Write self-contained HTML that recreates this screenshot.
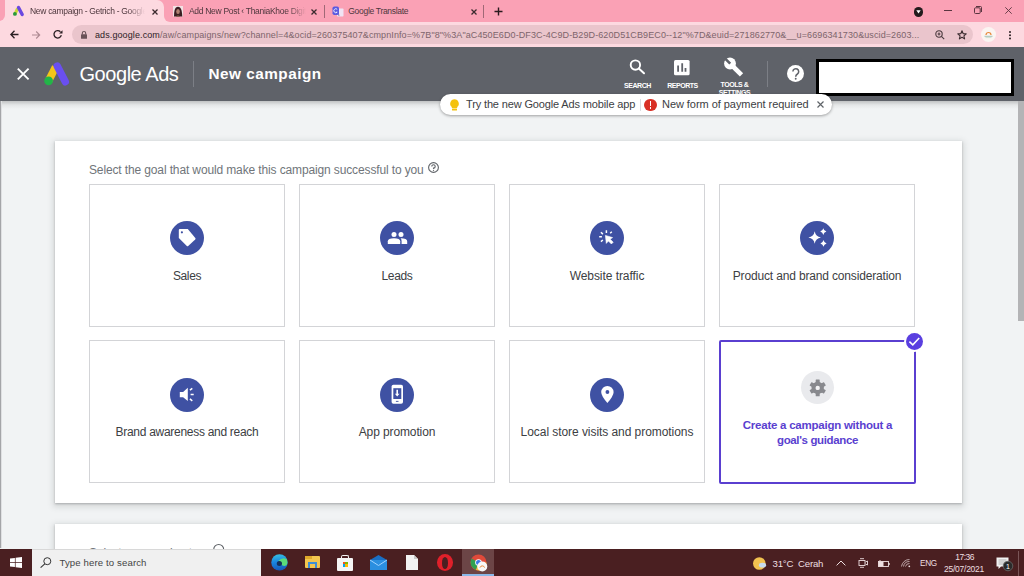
<!DOCTYPE html>
<html><head><meta charset="utf-8">
<style>
*{margin:0;padding:0;box-sizing:border-box}
html,body{width:1024px;height:576px;overflow:hidden;font-family:"Liberation Sans",sans-serif;background:#f1f3f4;position:relative}
.a{position:absolute}
svg{position:absolute;overflow:visible}
#tabbar{left:0;top:0;width:1024px;height:22px;background:#faa1b5}
#tab1{left:5px;top:0;width:159px;height:22px;background:#fdd9e0;border-radius:0 7px 0 0}
#addr{left:0;top:22px;width:1024px;height:25px;background:#fdd9e0}
#pill{left:72px;top:25px;width:901px;height:19px;background:#eac5cc;border-radius:10px}
.tt{font-size:8.5px;color:#4d373d;white-space:nowrap;letter-spacing:-0.3px}
#hdr{left:0;top:47px;width:1024px;height:54px;background:#5f6269}
#content{left:0;top:101px;width:1024px;height:447px;background:#f1f3f4}
#scroll{left:1018px;top:101px;width:6px;height:220px;background:#b4b4b6}
#card{left:55px;top:141px;width:907px;height:362px;background:#fff;box-shadow:0 1px 2px rgba(60,64,67,.3),0 2px 6px 2px rgba(60,64,67,.15)}
#card2{left:55px;top:524px;width:907px;height:40px;background:#fff;box-shadow:0 1px 2px rgba(60,64,67,.3),0 2px 6px 2px rgba(60,64,67,.15)}
.tile{position:absolute;width:196px;height:143px;border:1px solid #d3d4d7;background:#fff}
.tile .ic{position:absolute;left:80px;top:36px;width:34px;height:34px;border-radius:50%;background:#3f51a3}
.tile .ic svg{left:0;top:0}
.tile .lb{position:absolute;left:-10px;right:-10px;top:83.8px;text-align:center;font-size:12px;color:#3c4043;letter-spacing:-0.22px;white-space:nowrap}
#taskbar{left:0;top:549px;width:1024px;height:27px;background:#4a1f21}
.wt{color:#fff;font-size:7px;font-weight:bold;white-space:nowrap;text-align:center;letter-spacing:-0.45px}
.tb{color:#eedfe0;font-size:10px;white-space:nowrap}
</style></head><body>
<!-- TAB BAR -->
<div id="tabbar" class="a"></div>
<div id="tab1" class="a"></div>
<!-- tab flare -->
<div class="a" style="left:0;top:12px;width:8px;height:10px;background:#fdd9e0"></div>
<div class="a" style="left:-6px;top:0;width:11px;height:21px;background:#faa1b5;border-radius:0 0 6px 0"></div>
<div class="a" style="left:164px;top:14px;width:6px;height:8px;background:#fdd9e0"></div>
<div class="a" style="left:164px;top:8px;width:12px;height:14px;background:#faa1b5;border-radius:0 0 0 6px"></div>
<!-- tab1 favicon google ads -->
<svg style="left:12px;top:6px" width="12" height="10" viewBox="0 0 12 10">
 <path d="M5.6 2.5 L3 8" stroke="#c8d83a" stroke-width="3" stroke-linecap="butt"/>
 <circle cx="2.9" cy="7.9" r="1.9" fill="#2a9a3a"/>
 <path d="M6.5 1.5 L10.2 8.5" stroke="#6a48e0" stroke-width="3.4" stroke-linecap="round"/>
</svg>
<div class="a tt" style="left:30px;top:6.3px;width:115px;overflow:hidden;-webkit-mask-image:linear-gradient(90deg,#000 85%,transparent)">New campaign - Getrich - Google Ads</div>
<svg style="left:152px;top:9px" width="6" height="6" viewBox="0 0 6 6"><path d="M0.5 0.5L5.5 5.5M5.5 0.5L0.5 5.5" stroke="#3a2a2e" stroke-width="1.3"/></svg>
<!-- tab2 -->
<svg style="left:173px;top:5.5px" width="10" height="11" viewBox="0 0 10 11"><rect x="0" y="0" width="10" height="10.5" fill="#f2e2e4"/><path d="M1 10.5Q1 3 3 1.5Q5 0 7 1.5Q9 3 9.3 10.5Z" fill="#3a1e22"/><ellipse cx="5" cy="5.5" rx="1.8" ry="2.6" fill="#b08070"/><path d="M3 10.5Q5 7.5 7 10.5Z" fill="#6a4a30"/></svg>
<div class="a tt" style="left:189px;top:6.3px;width:117px;overflow:hidden;-webkit-mask-image:linear-gradient(90deg,#000 85%,transparent)">Add New Post ‹ ThaniaKhoe Digital</div>
<svg style="left:311px;top:9px" width="6" height="6" viewBox="0 0 6 6"><path d="M0.5 0.5L5.5 5.5M5.5 0.5L0.5 5.5" stroke="#3a2a2e" stroke-width="1.3"/></svg>
<div class="a" style="left:324px;top:5px;width:1px;height:13px;background:#a06876"></div>
<!-- tab3 -->
<svg style="left:332px;top:5.5px" width="12" height="11" viewBox="0 0 12 11"><rect x="5" y="2.5" width="6.5" height="8" rx="0.8" fill="#f0e4f4"/><rect x="0.5" y="0.5" width="6.5" height="8.5" rx="1.8" fill="#5b5ae0"/><path d="M5.2 3.3A2 2 0 1 0 5.2 6.2H3.8" fill="none" stroke="#e8e8ff" stroke-width="1"/><path d="M6 8.5L7.2 10.2V8.5Z" fill="#3a2a80"/></svg>
<div class="a tt" style="left:348.3px;top:6.3px">Google Translate</div>
<svg style="left:471px;top:9px" width="6" height="6" viewBox="0 0 6 6"><path d="M0.5 0.5L5.5 5.5M5.5 0.5L0.5 5.5" stroke="#3a2a2e" stroke-width="1.3"/></svg>
<div class="a" style="left:483px;top:5px;width:1px;height:13px;background:#a06876"></div>
<svg style="left:494px;top:7px" width="9" height="9" viewBox="0 0 9 9"><path d="M4.5 0.5V8.5M0.5 4.5H8.5" stroke="#2a1a1e" stroke-width="1.4"/></svg>
<!-- window controls -->
<div class="a" style="left:913.5px;top:7px;width:9.5px;height:9.5px;background:#231a1c;border-radius:50%"></div>
<svg style="left:916px;top:10px" width="5" height="4" viewBox="0 0 5 4"><path d="M0.3 0.3H4.7L2.5 3.6Z" fill="#fff"/></svg>
<div class="a" style="left:944px;top:9.5px;width:8px;height:1px;background:#5a3540"></div>
<svg style="left:974px;top:6px" width="8" height="8" viewBox="0 0 8 8"><rect x="0.5" y="1.8" width="5.7" height="5.7" rx="1" fill="none" stroke="#5a3540" stroke-width="1"/><path d="M2 0.5H6.5Q7.5 0.5 7.5 1.5V6" fill="none" stroke="#5a3540" stroke-width="1"/></svg>
<svg style="left:1005px;top:7px" width="7" height="7" viewBox="0 0 7 7"><path d="M0.3 0.3L6.7 6.7M6.7 0.3L0.3 6.7" stroke="#5a3540" stroke-width="0.9"/></svg>

<!-- ADDRESS BAR -->
<div id="addr" class="a"></div>
<svg style="left:10px;top:30px" width="9" height="9" viewBox="0 0 9 9"><path d="M8.5 4.5H1M4.5 0.8L0.9 4.5L4.5 8.2" fill="none" stroke="#2a1e22" stroke-width="1.3"/></svg>
<svg style="left:32px;top:30.5px" width="9" height="8" viewBox="0 0 9 8"><path d="M0 4H7.6M4.2 0.5L7.7 4L4.2 7.5" fill="none" stroke="#ae8a92" stroke-width="1.1"/></svg>
<svg style="left:53px;top:30px" width="10" height="9" viewBox="0 0 10 9"><path d="M8.3 5.2A3.7 3.7 0 1 1 7.4 1.8" fill="none" stroke="#2a1e22" stroke-width="1.3"/><path d="M9.5 0.2V3.6H6.1Z" fill="#2a1e22"/></svg>
<div id="pill" class="a"></div>
<svg style="left:81px;top:31px" width="6" height="8" viewBox="0 0 6 8"><rect x="0" y="3.3" width="6" height="4.5" rx="0.6" fill="#6a5258"/><path d="M1.3 3.5V2.2A1.7 1.7 0 0 1 4.7 2.2V3.5" fill="none" stroke="#6a5258" stroke-width="1.1"/></svg>
<div class="a" style="left:95px;top:30.1px;font-size:9px;white-space:nowrap;color:#7d646b;letter-spacing:0.1px"><span style="color:#2e2226">ads.google.com</span>/aw/campaigns/new?channel=4&amp;ocid=260375407&amp;cmpnInfo=%7B"8"%3A"aC450E6D0-DF3C-4C9D-B29D-620D51CB9EC0--12"%7D&amp;euid=271862770&amp;__u=6696341730&amp;uscid=2603...</div>
<svg style="left:935px;top:30px" width="10" height="10" viewBox="0 0 10 10"><circle cx="4" cy="4" r="3.2" fill="none" stroke="#4a3a3e" stroke-width="1.1"/><path d="M6.4 6.4L9.2 9.2M2.6 4H5.4M4 2.6V5.4" stroke="#4a3a3e" stroke-width="1.1"/></svg>
<svg style="left:956.5px;top:29.5px" width="10" height="10" viewBox="0 0 10 10"><path d="M5 0.8L6.2 3.7L9.2 3.9L6.9 5.9L7.6 8.9L5 7.3L2.4 8.9L3.1 5.9L0.8 3.9L3.8 3.7Z" fill="none" stroke="#3a2a2e" stroke-width="1.1" stroke-linejoin="round"/></svg>
<div class="a" style="left:981px;top:27px;width:15px;height:15px;border-radius:50%;background:#fbf5f2"></div>
<svg style="left:983px;top:29px" width="11" height="11" viewBox="0 0 11 11"><path d="M3 6A2.5 2.5 0 0 1 8 6" fill="none" stroke="#e8893a" stroke-width="1.2"/><path d="M1.5 7.3H9.5" stroke="#8fb8a8" stroke-width="0.8"/><path d="M2.5 8.6H8.5" stroke="#b5d0c0" stroke-width="0.6"/></svg>
<div class="a" style="left:1008.5px;top:31px;width:2px;height:2px;background:#2a1e22;border-radius:50%;box-shadow:0 3.3px 0 #2a1e22,0 6.6px 0 #2a1e22"></div>

<!-- HEADER -->
<div id="hdr" class="a"></div>
<svg style="left:17px;top:67.8px" width="12.4" height="12" viewBox="0 0 12.4 12"><path d="M0.8 0.6L11.6 11.4M11.6 0.6L0.8 11.4" stroke="#fff" stroke-width="1.9"/></svg>
<svg style="left:43px;top:62px" width="27" height="24" viewBox="0 0 27 24">
 <path d="M12.6 5L5.6 18.8" stroke="#f5c518" stroke-width="7.6" stroke-linecap="butt"/>
 <circle cx="5.6" cy="18.8" r="4.4" fill="#22b548"/>
 <path d="M14.2 4L22.3 19.8" stroke="#6a4ff0" stroke-width="7.4" stroke-linecap="round"/>
</svg>
<div class="a" style="left:79.5px;top:63px;font-size:20px;color:#fff;letter-spacing:-0.45px;white-space:nowrap">Google Ads</div>
<div class="a" style="left:193px;top:61px;width:1px;height:26px;background:#7c7f86"></div>
<div class="a" style="left:208.5px;top:65.3px;font-size:15.3px;font-weight:bold;color:#fff;letter-spacing:0.5px;white-space:nowrap">New campaign</div>
<!-- search icon -->
<svg style="left:629px;top:59px" width="17" height="17" viewBox="0 0 17 17"><circle cx="6.4" cy="6.1" r="4.7" fill="none" stroke="#fff" stroke-width="1.9"/><path d="M9.8 9.5L15 14.3" stroke="#fff" stroke-width="2" stroke-linecap="round"/></svg>
<div class="a wt" style="left:617.5px;top:81.7px;width:40px">SEARCH</div>
<svg style="left:674.3px;top:59.6px" width="16" height="16" viewBox="0 0 16 16"><rect x="0" y="0" width="15.6" height="15.2" rx="1.5" fill="#fff"/><path d="M4.1 5.5V11.8M8.2 3.3V11.8M11.5 8.1V11.8" stroke="#5f6269" stroke-width="1.8"/></svg>
<div class="a wt" style="left:662.5px;top:81.7px;width:40px">REPORTS</div>
<svg style="left:722px;top:56px" width="24" height="24" viewBox="0 0 24 24"><circle cx="8" cy="7.5" r="5.9" fill="#fff"/><path d="M8 7.5L19.5 18.8" stroke="#fff" stroke-width="4.6"/><path d="M3.2 2.7L8.2 7.7" stroke="#5f6269" stroke-width="2.6"/></svg>
<div class="a wt" style="left:713.5px;top:80.8px;width:42px;line-height:8.6px">TOOLS &amp;<br>SETTINGS</div>
<div class="a" style="left:767px;top:61px;width:1px;height:26px;background:#7c7f86"></div>
<div class="a" style="left:786.8px;top:64.8px;width:17.4px;height:17.4px;border-radius:50%;background:#fff"></div>
<svg style="left:786.8px;top:64.8px" width="18" height="18" viewBox="0 0 18 18"><path d="M5.9 6.6A2.9 2.9 0 1 1 10.4 9Q8.7 10 8.7 11.8" fill="none" stroke="#5f6269" stroke-width="1.5"/><circle cx="8.7" cy="13.8" r="0.95" fill="#5f6269"/></svg>
<div class="a" style="left:816px;top:59px;width:198px;height:37px;background:#fff;border:3px solid #000"></div>

<!-- CONTENT -->
<div id="content" class="a"></div>
<div class="a" style="left:0;top:101px;width:1024px;height:8px;background:linear-gradient(rgba(0,0,0,.2),rgba(0,0,0,.05) 50%,rgba(0,0,0,0))"></div>
<div class="a" style="left:0;top:101px;width:1px;height:447px;background:#a4a5a8"></div><div class="a" style="left:1px;top:101px;width:1px;height:447px;background:#dfe0e2"></div>
<div id="scroll" class="a"></div>
<div id="card" class="a">
  <div class="a" style="left:34px;top:22px;font-size:12px;color:#70757a;letter-spacing:-0.13px;white-space:nowrap">Select the goal that would make this campaign successful to you</div>
  <svg style="left:372.7px;top:20.6px" width="11" height="11" viewBox="0 0 11 11"><circle cx="5.5" cy="5.5" r="4.9" fill="none" stroke="#5f6368" stroke-width="1.1"/><path d="M3.8 4.4A1.7 1.7 0 1 1 5.5 6.1V6.9" fill="none" stroke="#5f6368" stroke-width="1.1"/><circle cx="5.5" cy="8.3" r="0.65" fill="#5f6368"/></svg>
  <!-- row 1 -->
  <div class="tile" style="left:34px;top:43px"><div class="ic">
    <svg width="34" height="34" viewBox="0 0 34 34"><path d="M8.8 9.1Q8.8 8.1 9.8 8.1H17.8L25.3 16.9Q25.9 17.7 25.2 18.4L18.2 25Q17.5 25.6 16.8 25L8.8 17.1Z" fill="#fff"/><circle cx="11.9" cy="11.3" r="1.1" fill="#3f51a3"/></svg>
  </div><div class="lb" style="top:83.5px;letter-spacing:-0.41px">Sales</div></div>
  <div class="tile" style="left:244px;top:43px"><div class="ic">
    <svg width="34" height="34" viewBox="0 0 34 34"><circle cx="14" cy="13.5" r="2.5" fill="#fff"/><circle cx="21" cy="13.5" r="2.5" fill="#fff"/><path d="M7.8 23V20.3Q7.8 17.2 14 17.2Q20.2 17.2 20.2 20.3V23Z" fill="#fff"/><path d="M20.6 17.3Q27.2 17.5 27.2 20.3V23H21.6V20.3Q21.6 18.5 20.6 17.3Z" fill="#fff"/></svg>
  </div><div class="lb" style="top:83.5px;letter-spacing:-0.33px">Leads</div></div>
  <div class="tile" style="left:454px;top:43px"><div class="ic">
    <svg width="34" height="34" viewBox="0 0 34 34"><path d="M15.4 14.4L16.3 22.4L18.4 20L21.4 23L23.2 21.2L20.2 18.2L22.6 16.6Z" fill="#fff" stroke="#fff" stroke-width="0.6" stroke-linejoin="round"/><path d="M16.4 9.2V11.9M10.9 11.2L12.9 13.1M21.8 10.8L20.2 12.2M9.2 15.8H11.9M10.9 20.6L12.9 19" stroke="#fff" stroke-width="1.5"/></svg>
  </div><div class="lb" style="top:83.5px;letter-spacing:-0.06px">Website traffic</div></div>
  <div class="tile" style="left:664px;top:43px"><div class="ic">
    <svg width="34" height="34" viewBox="0 0 34 34"><path d="M14.7 10.3Q15.6 15.6 21 16.5Q15.6 17.4 14.7 22.7Q13.8 17.4 8.4 16.5Q13.8 15.6 14.7 10.3Z" fill="#fff"/><path d="M23.3 7.3Q23.8 9.9 26.4 10.6Q23.8 11.3 23.3 13.9Q22.8 11.3 20.2 10.6Q22.8 9.9 23.3 7.3Z" fill="#fff"/><path d="M23.5 19.1Q24 21.7 26.6 22.4Q24 23.1 23.5 25.7Q23 23.1 20.4 22.4Q23 21.7 23.5 19.1Z" fill="#fff"/></svg>
  </div><div class="lb" style="top:83.5px;letter-spacing:-0.16px">Product and brand consideration</div></div>
  <!-- row 2 -->
  <div class="tile" style="left:34px;top:199px"><div class="ic" style="top:37px">
    <svg width="34" height="34" viewBox="0 0 34 34"><path d="M9.8 14H13.1L17.8 9.8V23L13.1 19.2H9.8Z" fill="#fff"/><path d="M19.9 12.1L22.3 10.3M20.6 16.6H23.7M19.9 20.9L22.3 22.8" stroke="#fff" stroke-width="1.5"/></svg>
  </div><div class="lb" style="top:84.3px;letter-spacing:-0.29px">Brand awareness and reach</div></div>
  <div class="tile" style="left:244px;top:199px"><div class="ic" style="top:37px">
    <svg width="34" height="34" viewBox="0 0 34 34"><rect x="11.6" y="6.8" width="11.4" height="19" rx="1.8" fill="#fff"/><rect x="13.3" y="10.2" width="8" height="10.8" fill="#3f51a3"/><path d="M17.2 11.8V16.6" stroke="#fff" stroke-width="1.6"/><path d="M14.9 15.8H19.5L17.2 18.6Z" fill="#fff"/><path d="M15.9 23.4H18.5" stroke="#3f51a3" stroke-width="0.9"/></svg>
  </div><div class="lb" style="top:84.3px;letter-spacing:-0.11px">App promotion</div></div>
  <div class="tile" style="left:454px;top:199px"><div class="ic" style="top:37px">
    <svg width="34" height="34" viewBox="0 0 34 34"><path d="M17.4 7.9A6.2 6.2 0 0 1 23.6 14.1Q23.6 18 17.4 25.1Q11.2 18 11.2 14.1A6.2 6.2 0 0 1 17.4 7.9Z" fill="#fff"/><circle cx="17.4" cy="14" r="1.9" fill="#3f51a3"/></svg>
  </div><div class="lb" style="top:84.3px;letter-spacing:-0.06px">Local store visits and promotions</div></div>
  <div class="tile" style="left:664px;top:199px;width:197px;height:144px;border:2px solid #5a3fd0;border-radius:2px">
    <div class="ic" style="left:80px;top:29px;width:33px;height:33px;background:#e9eaed">
      <svg width="33" height="33" viewBox="0 0 33 33" style="left:0;top:0"><g transform="translate(16.7 16.9)" fill="#88898e"><circle r="6.2"/><rect x="-2" y="-8.3" width="4" height="4" rx="0.5"/><rect x="-2" y="-8.3" width="4" height="4" rx="0.5" transform="rotate(60)"/><rect x="-2" y="-8.3" width="4" height="4" rx="0.5" transform="rotate(120)"/><rect x="-2" y="-8.3" width="4" height="4" rx="0.5" transform="rotate(180)"/><rect x="-2" y="-8.3" width="4" height="4" rx="0.5" transform="rotate(240)"/><rect x="-2" y="-8.3" width="4" height="4" rx="0.5" transform="rotate(300)"/><circle r="2.2" fill="#f3f3f5"/></g></svg>
    </div>
    <div class="a" style="left:-10px;right:-10px;top:76.4px;text-align:center;font-size:11.5px;font-weight:bold;color:#5a3fd0;line-height:14.4px;white-space:nowrap"><span style="letter-spacing:-0.24px">Create a campaign without a</span><br><span style="letter-spacing:-0.36px">goal's guidance</span></div>
  </div>
  <div class="a" style="left:849px;top:190px;width:21px;height:21px;border-radius:50%;background:#fff"></div>
  <div class="a" style="left:851px;top:192px;width:17px;height:17px;border-radius:50%;background:#5a3fe0"></div>
  <svg style="left:851px;top:192px" width="17" height="17" viewBox="0 0 17 17"><path d="M3.4 8.7L6.8 11.8L13.2 5" fill="none" stroke="#fff" stroke-width="1.6"/></svg>
</div>
<div id="card2" class="a">
  <div class="a" style="left:34px;top:22px;font-size:12px;color:#70757a;white-space:nowrap;letter-spacing:-0.13px">Select a campaign type</div>
  <svg style="left:158px;top:19.8px" width="11" height="11" viewBox="0 0 11 11"><circle cx="5.7" cy="5.5" r="5" fill="none" stroke="#5f6368" stroke-width="1.1"/></svg>
</div>

<!-- NOTIFICATION PILL -->
<div class="a" style="left:440px;top:94px;width:392px;height:21px;background:#fff;border-radius:11px;box-shadow:0 1px 3px rgba(0,0,0,.35)"></div>
<svg style="left:449px;top:99px" width="11" height="12" viewBox="0 0 11 12"><path d="M5.5 0.3A4.4 4.4 0 0 1 8.2 8.1V9H2.8V8.1A4.4 4.4 0 0 1 5.5 0.3Z" fill="#f4c20d"/><rect x="3" y="9.6" width="5" height="1.8" rx="0.5" fill="#f4c20d"/></svg>
<div class="a" style="left:466px;top:98px;font-size:11px;color:#3c4043;letter-spacing:-0.14px;white-space:nowrap">Try the new Google Ads mobile app</div>
<div class="a" style="left:640px;top:99px;width:1px;height:12px;background:#dadce0"></div>
<div class="a" style="left:644px;top:98.5px;width:12.5px;height:12.5px;border-radius:50%;background:#d93025"></div>
<div class="a" style="left:649.6px;top:101px;width:1.6px;height:5px;background:#fff"></div>
<div class="a" style="left:649.6px;top:107.3px;width:1.6px;height:1.6px;background:#fff"></div>
<div class="a" style="left:662px;top:98px;font-size:11px;color:#3c4043;letter-spacing:-0.05px;white-space:nowrap">New form of payment required</div>
<svg style="left:816.5px;top:101px" width="7" height="7" viewBox="0 0 7 7"><path d="M0.5 0.5L6.5 6.5M6.5 0.5L0.5 6.5" stroke="#5f6368" stroke-width="1.2"/></svg>

<!-- TASKBAR -->
<div id="taskbar" class="a"></div>
<svg style="left:10px;top:557px" width="12" height="11" viewBox="0 0 12 11"><path d="M0 1.6L4.9 0.9V5.1H0Z M5.6 0.8L12 0V5.1H5.6Z M0 5.8H4.9V10.1L0 9.4Z M5.6 5.8H12V11L5.6 10.2Z" fill="#fff"/></svg>
<div class="a" style="left:32px;top:549px;width:229px;height:27px;background:#f0f0f0;border-top:1px solid #d8d8d8"></div>
<svg style="left:40px;top:557px" width="12" height="11" viewBox="0 0 12 11"><circle cx="7.3" cy="4.2" r="3.5" fill="none" stroke="#333" stroke-width="1"/><path d="M4.8 6.8L0.6 10.6" stroke="#333" stroke-width="1.1"/></svg>
<div class="a" style="left:59.5px;top:557.4px;font-size:9.6px;color:#444;letter-spacing:0.12px;white-space:nowrap">Type here to search</div>
<!-- edge -->
<svg style="left:271px;top:554px" width="17" height="17" viewBox="0 0 17 17"><defs><linearGradient id="eg" x1="0.3" y1="0" x2="0.4" y2="1"><stop offset="0" stop-color="#38c0e0"/><stop offset="0.45" stop-color="#1a88e0"/><stop offset="1" stop-color="#1658b8"/></linearGradient></defs><circle cx="8.5" cy="8.4" r="8.2" fill="url(#eg)"/><path d="M7.5 6.8Q11.5 2.5 15.8 5.2Q17.4 9.5 15 11.6Q12 12.6 10 10.2Z" fill="#5bdc7a"/><ellipse cx="8.4" cy="9.6" rx="2.6" ry="2.5" fill="#15305a"/></svg>
<!-- folder -->
<div class="a" style="left:305px;top:556px;width:15px;height:12px;background:#f3c64f;border-radius:1px"></div>
<div class="a" style="left:305px;top:556px;width:7px;height:3px;background:#e0a92b"></div>
<div class="a" style="left:308px;top:562px;width:9px;height:6px;background:#3d8fd6"></div>
<div class="a" style="left:310px;top:564px;width:5px;height:4px;background:#f3c64f"></div>
<!-- store -->
<div class="a" style="left:337px;top:557.5px;width:16px;height:13px;background:#f5f5f5;border-radius:1px"></div>
<div class="a" style="left:341px;top:554.5px;width:8px;height:5px;border:1.5px solid #f5f5f5;border-bottom:none;border-radius:2px 2px 0 0"></div>
<div class="a" style="left:342.5px;top:561.5px;width:2.3px;height:2.3px;background:#f25022"></div>
<div class="a" style="left:345.3px;top:561.5px;width:2.3px;height:2.3px;background:#7fba00"></div>
<div class="a" style="left:342.5px;top:564.3px;width:2.3px;height:2.3px;background:#00a4ef"></div>
<div class="a" style="left:345.3px;top:564.3px;width:2.3px;height:2.3px;background:#ffb900"></div>
<!-- mail -->
<svg style="left:370px;top:555px" width="17" height="15" viewBox="0 0 17 15"><path d="M0 5L8.5 0L17 5V15H0Z" fill="#1a6fc4"/><rect x="0" y="5" width="17" height="10" fill="#2b8fe0"/><path d="M0 5L8.5 10.5L17 5" fill="none" stroke="#9fd3ff" stroke-width="1"/></svg>
<!-- file -->
<svg style="left:406px;top:555px" width="12" height="15" viewBox="0 0 12 15"><path d="M0 0H8L12 4V15H0Z" fill="#f2f2f2"/><path d="M8 0V4H12" fill="#c8c8c8"/></svg>
<!-- opera -->
<div class="a" style="left:436.5px;top:554px;width:16.5px;height:17px;border-radius:50%;background:#e0202a"></div>
<div class="a" style="left:441.5px;top:556.5px;width:6.5px;height:12px;border-radius:50%;background:#4a1f21"></div>
<!-- chrome active -->
<div class="a" style="left:462px;top:549px;width:32px;height:27px;background:#6c4546"></div>
<div class="a" style="left:462px;top:574px;width:32px;height:2px;background:#8ab8e8"></div>
<svg style="left:470px;top:554px" width="18" height="18" viewBox="0 0 18 18"><circle cx="8.5" cy="8.5" r="8" fill="#e04a3a"/><path d="M8.5 8.5L1.6 4.5A8 8 0 0 0 6 16.1Z" fill="#2ea150"/><path d="M8.5 8.5L16.5 8.5A8 8 0 0 1 6 16.1Z" fill="#f4c136"/><circle cx="8.5" cy="8.5" r="3.3" fill="#fff"/><circle cx="8.5" cy="8.5" r="2.5" fill="#3b7be6"/><circle cx="12.3" cy="12.5" r="5" fill="#f7f7f7"/><path d="M10 13.6A2.4 2.4 0 0 1 14.6 13.6" fill="none" stroke="#e8893a" stroke-width="1"/></svg>
<!-- tray -->
<svg style="left:753px;top:556.5px" width="14" height="13" viewBox="0 0 14 13"><circle cx="6.3" cy="6.5" r="6.3" fill="#f2c250"/><ellipse cx="9.5" cy="8.2" rx="3.6" ry="2.4" fill="#c7dcef"/></svg>
<div class="a tb" style="left:772.5px;top:558.2px;font-size:9.6px;letter-spacing:-0.2px">31°C&nbsp; Cerah</div>
<svg style="left:836px;top:560px" width="10" height="6" viewBox="0 0 10 6"><path d="M0.6 5.4L5 1L9.4 5.4" fill="none" stroke="#eedfe0" stroke-width="1"/></svg>
<svg style="left:858px;top:558px" width="10" height="10" viewBox="0 0 10 10"><rect x="1" y="2.5" width="6" height="5" fill="none" stroke="#eedfe0" stroke-width="0.9"/><path d="M7.5 4L9.5 3V7L7.5 6M2 0.7H6M2 9.3H6" fill="none" stroke="#eedfe0" stroke-width="0.9"/></svg>
<svg style="left:878px;top:560px" width="12" height="7" viewBox="0 0 12 7"><rect x="0.5" y="1.5" width="10" height="5" fill="none" stroke="#eedfe0" stroke-width="0.9"/><rect x="0.5" y="1.5" width="5" height="5" fill="#eedfe0"/><rect x="10.5" y="3" width="1.2" height="2" fill="#eedfe0"/><path d="M2 0V1.5" stroke="#eedfe0"/></svg>
<svg style="left:901px;top:559px" width="10" height="8" viewBox="0 0 10 8"><path d="M0.5 7.5A8 8 0 0 1 8.5 0.5M2.5 7.5A6 6 0 0 1 8.5 2.5M4.5 7.5A4 4 0 0 1 8.5 4.5" fill="none" stroke="#c9b3b5" stroke-width="0.9"/><circle cx="8.3" cy="7.3" r="0.9" fill="#eedfe0"/></svg>
<div class="a tb" style="left:920px;top:558.6px;font-size:8.2px;letter-spacing:-0.25px">ENG</div>
<div class="a tb" style="left:955.2px;top:552.1px;font-size:8.5px;letter-spacing:-0.5px">17:36</div>
<div class="a tb" style="left:944px;top:564.3px;font-size:8.5px;letter-spacing:-0.25px">25/07/2021</div>
<svg style="left:996px;top:557px" width="18" height="14" viewBox="0 0 18 14"><path d="M0.5 0.5H12.5V9.5H5L2.5 12V9.5H0.5Z" fill="#f2f2f2"/><path d="M2.5 3H10.5M2.5 5H10.5M2.5 7H8" stroke="#9a9a9a" stroke-width="0.7"/><circle cx="12" cy="9" r="4.8" fill="#2b2b2b" stroke="#6a6a6a" stroke-width="0.8"/><text x="12" y="11.6" font-size="7" fill="#fff" text-anchor="middle" font-family="Liberation Sans">1</text></svg>
<div class="a" style="left:1018px;top:551px;width:1px;height:25px;background:#7a5557"></div>
</body></html>
